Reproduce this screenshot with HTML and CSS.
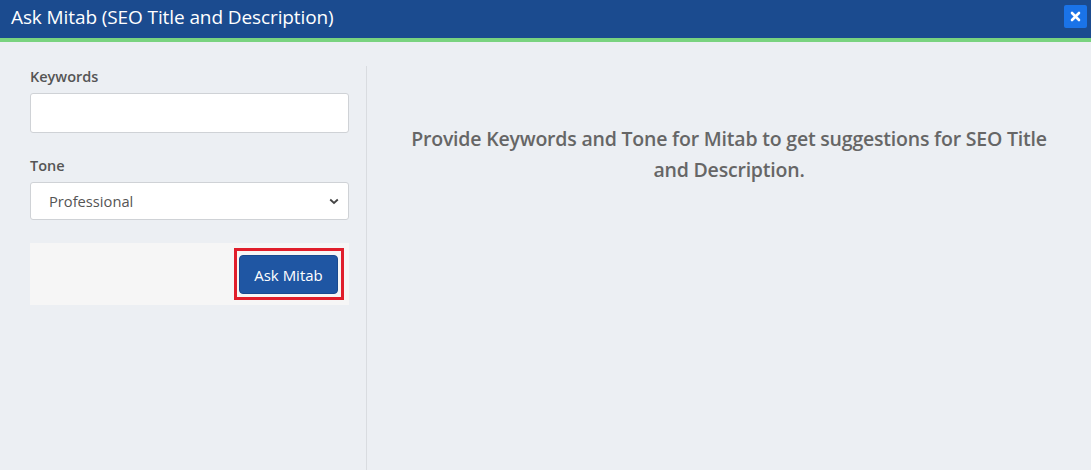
FILE: index.html
```html
<!DOCTYPE html>
<html>
<head>
<meta charset="utf-8">
<link rel="stylesheet" href="styles.css">
</head>
<body>
<div class="dialog">
  <div class="titlebar">
    <span class="title">Ask Mitab (SEO Title and Description)</span>
    <button class="close" aria-label="Close">
      <svg width="11" height="11" viewBox="0 0 11 11"><path d="M2 2 L9 9 M9 2 L2 9" stroke="#fff" stroke-width="2.6" stroke-linecap="round"/></svg>
    </button>
  </div>
  <div class="content">
    <div class="left">
      <label class="label">Keywords</label>
      <input class="input" type="text">
      <label class="label tone">Tone</label>
      <div class="select">
        <span>Professional</span>
        <svg width="10" height="7" viewBox="0 0 10 7"><path d="M1.2 1.5 L5 5 L8.8 1.5" fill="none" stroke="#444" stroke-width="1.8"/></svg>
      </div>
      <div class="footer">
        <div class="highlight"><button class="btn">Ask Mitab</button></div>
      </div>
    </div>
    <div class="right">
      <p class="hint">Provide Keywords and Tone for Mitab to get suggestions for SEO Title and Description.</p>
    </div>
  </div>
</div>
</body>
</html>
```
FILE: styles.css
```css
* { box-sizing: border-box; }
html, body { margin: 0; padding: 0; height: 100%; }
body {
  font-family: "Open Sans", "Noto Sans", sans-serif;
  background: #eceff3;
  overflow: hidden;
}
.dialog { display: flex; flex-direction: column; height: 470px; }
.titlebar {
  height: 42px;
  background: #1b4b8f;
  border-bottom: 4px solid #79d37f;
  display: flex;
  align-items: flex-start;
  justify-content: space-between;
  padding: 0 4px 0 11px;
}
.title {
  color: #fff;
  font-size: 19px;
  line-height: 35px;
  letter-spacing: -0.1px;
}
.close {
  margin-top: 5px;
  width: 23px;
  height: 23px;
  border: none;
  border-radius: 2px;
  background: #1a73e8;
  padding: 0;
  display: flex;
  align-items: center;
  justify-content: center;
}
.content { flex: 1; display: flex; }
.left {
  width: 367px;
  padding: 0 17px 0 30px;
  border-right: 1px solid #d9dce0;
  margin-top: 24px;
  display: flex;
  flex-direction: column;
}
.label {
  font-size: 14.5px;
  font-weight: 600;
  color: #555;
  line-height: 20px;
  margin-top: 1px;
}
.label.tone { margin-top: 0; }
.input {
  margin-top: 6px;
  height: 40px;
  width: 319px;
  border: 1px solid #cfd2d6;
  border-radius: 3px;
  background: #fff;
  margin-bottom: 23px;
}
.select {
  margin-top: 6px;
  height: 38px;
  width: 319px;
  border: 1px solid #cfd2d6;
  border-radius: 3px;
  background: #fff;
  display: flex;
  align-items: center;
  justify-content: space-between;
  padding: 0 9px 0 18px;
  font-size: 14.7px;
  color: #555;
}
.footer {
  margin-top: 23px;
  width: 319px;
  height: 62px;
  background: #f6f6f6;
  display: flex;
  justify-content: flex-end;
  align-items: center;
  padding-right: 5px;
}
.highlight {
  border: 3px solid #e01e2b;
  padding: 4px 3px 3px 2px;
  display: flex;
}
.btn {
  width: 99px;
  height: 39px;
  background: #1f56a3;
  color: #fff;
  border: 1px solid #1a4a8e;
  border-radius: 4px;
  font-family: "Open Sans", "Noto Sans", sans-serif;
  font-size: 15px;
  padding: 0;
}
.right {
  flex: 1;
  display: flex;
  justify-content: center;
  padding: 0 30px;
}
.hint {
  margin: 81px 0 0;
  text-align: center;
  font-size: 19.5px;
  font-weight: 600;
  line-height: 31px;
  color: #666;
  letter-spacing: -0.2px;
}
```
